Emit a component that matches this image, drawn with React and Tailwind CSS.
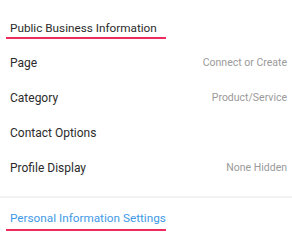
const rows = [
    { label: "Page", value: "Connect or Create" },
    { label: "Category", value: "Product/Service" },
    { label: "Contact Options", value: "" },
    { label: "Profile Display", value: "None Hidden" },
];

const App = () => {
    return (
        <div className="w-[292px] h-[244px] bg-white overflow-hidden font-['Roboto',sans-serif]">
            <div className="ml-[6px] w-[160px] border-b-2 border-[#ef2a5c] pl-[4px] pt-[20px] pb-[1px] text-[11.75px] leading-[16px] whitespace-nowrap text-[#2b2b2b]">
                Public Business Information
            </div>
            <div className="mt-[6px]">
                {rows.map((row) => (
                    <div key={row.label} className="h-[35px] flex items-center justify-between pl-[10px] pr-[5px] whitespace-nowrap">
                        <span className="text-[12px] text-[#2b2b2b]">{row.label}</span>
                        <span className="text-[10.5px] text-[#9a9a9a]">{row.value}</span>
                    </div>
                ))}
            </div>
            <div className="mt-[11px] h-[2px] bg-[#f2f2f2]"></div>
            <div className="ml-[6px] w-[160px] border-b-2 border-[#ef2a5c] pl-[4px] pt-[12px] pb-[3px] text-[11.75px] leading-[16px] whitespace-nowrap text-[#3f9ae6]">
                Personal Information Settings
            </div>
        </div>
    );
};

export default App;
